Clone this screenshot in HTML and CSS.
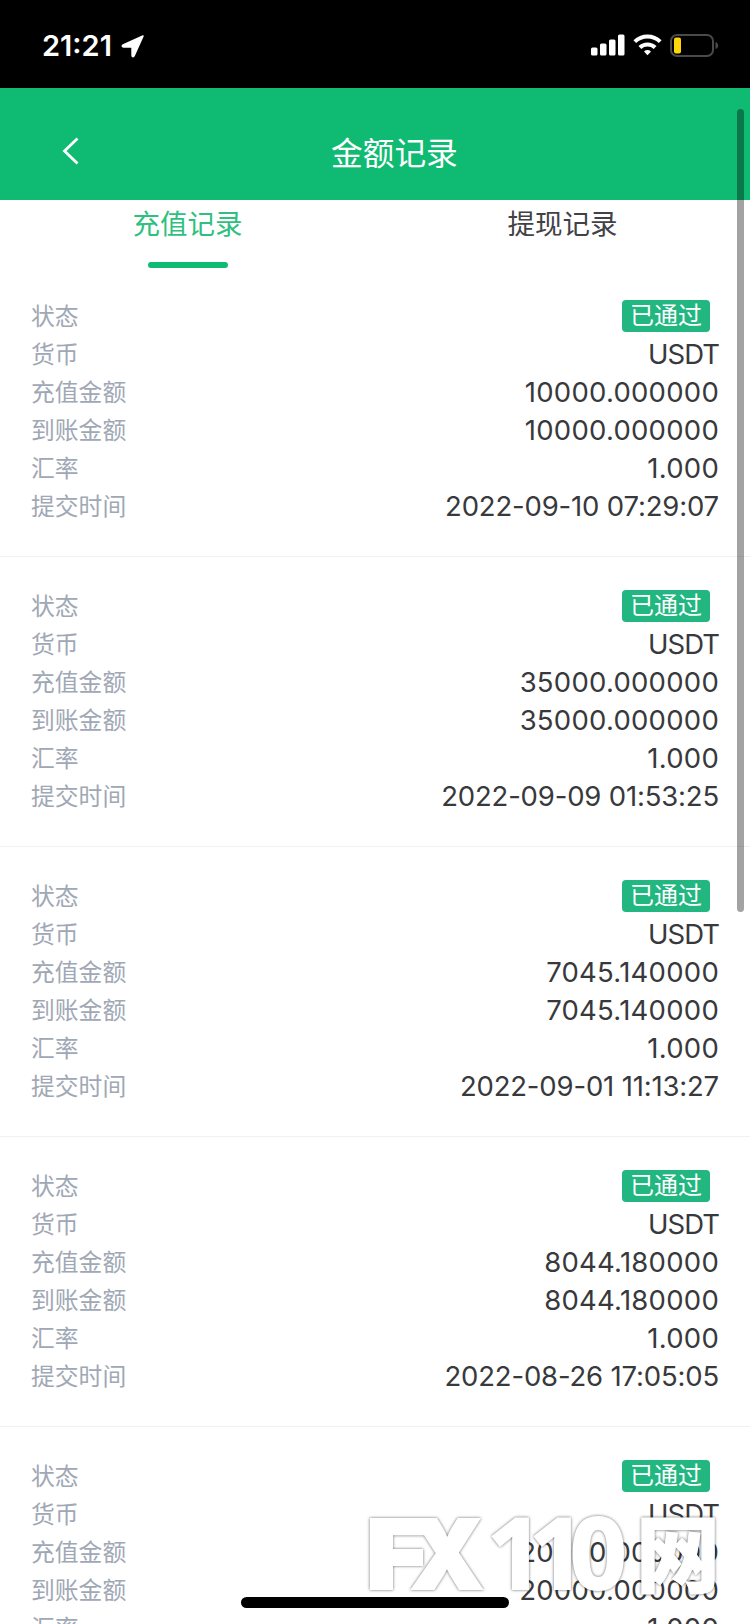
FILE: index.html
```
<!DOCTYPE html>
<html lang="zh-CN">
<head>
	<meta charset="utf-8">
	<title>金额记录</title>
	<link rel="stylesheet" href="styles.css">
</head>
<body>
<div class="screen">

	<div class="statusbar">
		<div class="status-left">
			<span class="time">21:21</span>
			<svg class="location" width="24" height="24" viewBox="0 0 24 24"><path d="M22 2 13 22c-.5 1-1.900.9-1.900-.4V12.900H2.500c-1.400 0-1.600-1.400-.4-1.900z" fill="#fff" stroke="#fff" stroke-width="1.600" stroke-linejoin="round"/></svg>
		</div>
		<div class="status-right">
			<svg width="130" height="26" viewBox="0 0 130 26">
				<g fill="#fff">
					<rect x="1" y="15.500" width="6.500" height="8" rx="1.500"/>
					<rect x="10" y="11.500" width="6.500" height="12" rx="1.500"/>
					<rect x="19" y="7.500" width="6.500" height="16" rx="1.500"/>
					<rect x="28" y="2.500" width="6.500" height="21" rx="1.500"/>
				</g>
				<g fill="none" stroke="#fff" stroke-width="4">
					<path d="M44.800 9.600a18.500 18.500 0 0 1 25.400 0"/>
					<path d="M49.900 15.500a11 11 0 0 1 15.200 0"/>
				</g>
				<path d="M57.500 23.300l-3.500-3.800a5.500 5.500 0 0 1 7 0z" fill="#fff"/>
				<rect x="81" y="3" width="42" height="21" rx="6" fill="none" stroke="#4a4a4c" stroke-width="2"/>
				<path d="M125.500 10c3.600 1 3.600 6 0 7z" fill="#4a4a4c"/>
				<rect x="84" y="5.500" width="7" height="16" rx="2" fill="#ffd60a"/>
			</svg>
		</div>
	</div>

	<div class="header">
		<svg class="back" width="18" height="30" viewBox="0 0 18 30"><path d="M15.500 2.500 2.500 15l13 12.500" fill="none" stroke="#fff" stroke-width="2.800"/></svg>
		<span class="title">金额记录</span>
	</div>

	<div class="tabs">
		<div class="tab active">充值记录</div>
		<div class="tab">提现记录</div>
	</div>

	<div class="records">
		<div class="record">
			<div class="row"><span class="label">状态</span><span class="badge">已通过</span></div>
			<div class="row"><span class="label">货币</span><span class="value currency">USDT</span></div>
			<div class="row"><span class="label">充值金额</span><span class="value">10000.000000</span></div>
			<div class="row"><span class="label">到账金额</span><span class="value">10000.000000</span></div>
			<div class="row"><span class="label">汇率</span><span class="value">1.000</span></div>
			<div class="row"><span class="label">提交时间</span><span class="value date">2022-09-10 07:29:07</span></div>
		</div>
		<div class="record">
			<div class="row"><span class="label">状态</span><span class="badge">已通过</span></div>
			<div class="row"><span class="label">货币</span><span class="value currency">USDT</span></div>
			<div class="row"><span class="label">充值金额</span><span class="value">35000.000000</span></div>
			<div class="row"><span class="label">到账金额</span><span class="value">35000.000000</span></div>
			<div class="row"><span class="label">汇率</span><span class="value">1.000</span></div>
			<div class="row"><span class="label">提交时间</span><span class="value date">2022-09-09 01:53:25</span></div>
		</div>
		<div class="record">
			<div class="row"><span class="label">状态</span><span class="badge">已通过</span></div>
			<div class="row"><span class="label">货币</span><span class="value currency">USDT</span></div>
			<div class="row"><span class="label">充值金额</span><span class="value">7045.140000</span></div>
			<div class="row"><span class="label">到账金额</span><span class="value">7045.140000</span></div>
			<div class="row"><span class="label">汇率</span><span class="value">1.000</span></div>
			<div class="row"><span class="label">提交时间</span><span class="value date">2022-09-01 11:13:27</span></div>
		</div>
		<div class="record">
			<div class="row"><span class="label">状态</span><span class="badge">已通过</span></div>
			<div class="row"><span class="label">货币</span><span class="value currency">USDT</span></div>
			<div class="row"><span class="label">充值金额</span><span class="value">8044.180000</span></div>
			<div class="row"><span class="label">到账金额</span><span class="value">8044.180000</span></div>
			<div class="row"><span class="label">汇率</span><span class="value">1.000</span></div>
			<div class="row"><span class="label">提交时间</span><span class="value date">2022-08-26 17:05:05</span></div>
		</div>
		<div class="record">
			<div class="row"><span class="label">状态</span><span class="badge">已通过</span></div>
			<div class="row"><span class="label">货币</span><span class="value currency">USDT</span></div>
			<div class="row"><span class="label">充值金额</span><span class="value">20000.000000</span></div>
			<div class="row"><span class="label">到账金额</span><span class="value">20000.000000</span></div>
			<div class="row"><span class="label">汇率</span><span class="value">1.000</span></div>
		</div>
	</div>

	<!-- overlays -->
	<div class="scrollbar"></div>
	<div class="home-bar"></div>
	<svg class="watermark" width="380" height="100" viewBox="0 0 380 100">
		<text class="mark" x="6" y="81" font-size="96" textLength="62" lengthAdjust="spacingAndGlyphs">F</text>
		<text class="mark" x="50" y="81" font-size="96" textLength="74" lengthAdjust="spacingAndGlyphs">X</text>
		<text class="mark digits" x="127 169 210" y="81" font-size="99">110</text>
		<text class="mark cjk" x="276" y="78" font-size="84">网</text>
	</svg>

</div>
</body>
</html>
```
FILE: styles.css
```
body{
	margin: 0;
	background: #fff;
	font-family: Inter, "Noto Sans CJK SC", sans-serif;
	color: #414245;
}

.screen{
	position: relative;
	width: 750px;
	height: 1624px;
	overflow: hidden;
}

.statusbar{
	box-sizing: border-box;
	display: flex;
	justify-content: space-between;
	height: 88px;
	padding: 32px 30px 0 42px;
	background: #000;
	color: #fff;
}

.status-left{
	display: flex;
	align-items: center;
	gap: 9px;
	height: 28px;
}

.time{
	font-size: 29px;
	font-weight: 600;
	line-height: 28px;
}

.header{
	box-sizing: border-box;
	display: flex;
	align-items: center;
	height: 112px;
	padding-top: 12px;
	background: #0fbb72;
	color: #fff;
}

.back{
	margin: 2px 0 0 62px;
}

.title{
	margin: 8px 0 0 251px;
	font-size: 31.7px;
	line-height: 44px;
}

.tabs{
	display: flex;
	height: 68px;
	margin-bottom: -1px;
}

.tab{
	display: flex;
	flex: 1;
	flex-direction: column;
	align-items: center;
	justify-content: space-between;
	font-size: 27.5px;
	line-height: 48px;
}

.active{
	color: #2fc07f;
}

.active:after{
	content: "";
	width: 80px;
	height: 6px;
	border-radius: 3px;
	background: #0fbb72;
}

.record{
	padding: 30px 31px 31px;
	border-bottom: 1px solid #f0f1f3;
}

.row{
	display: flex;
	align-items: center;
	justify-content: space-between;
	height: 38px;
}

.label{
	padding-bottom: 4px;
	font-size: 23.8px;
	color: #a0a8b5;
}

.value{
	font-size: 27.5px;
	letter-spacing: .25px;
	line-height: 38px;
	color: #38393c;
}

.currency{
	letter-spacing: -1px;
}

.date{
	letter-spacing: -.17px;
}

.badge{
	margin-right: 9px;
	padding: 0 8px;
	border-radius: 4px;
	background: #22b680;
	color: #fff;
	font-size: 24px;
	line-height: 32px;
}

.scrollbar{
	position: absolute;
	top: 109px;
	left: 737px;
	width: 7px;
	height: 803px;
	border-radius: 4px;
	background: rgba(0, 0, 0, .36);
}

.home-bar{
	position: absolute;
	top: 1597px;
	left: 241px;
	width: 268px;
	height: 11px;
	border-radius: 6px;
	background: #000;
}

.watermark{
	position: absolute;
	top: 1508px;
	left: 360px;
	filter: drop-shadow(0 0 1.5px rgba(0, 0, 0, .6));
}

.mark{
	font-family: Inter, sans-serif;
	font-weight: 900;
	fill: #fff;
	stroke: #fff;
	stroke-width: 2px;
}

.digits{
	font-family: "Open Sans", sans-serif;
	font-weight: 700;
}

.cjk{
	font-family: "Noto Sans CJK SC", sans-serif;
	stroke-width: 1px;
}
```
